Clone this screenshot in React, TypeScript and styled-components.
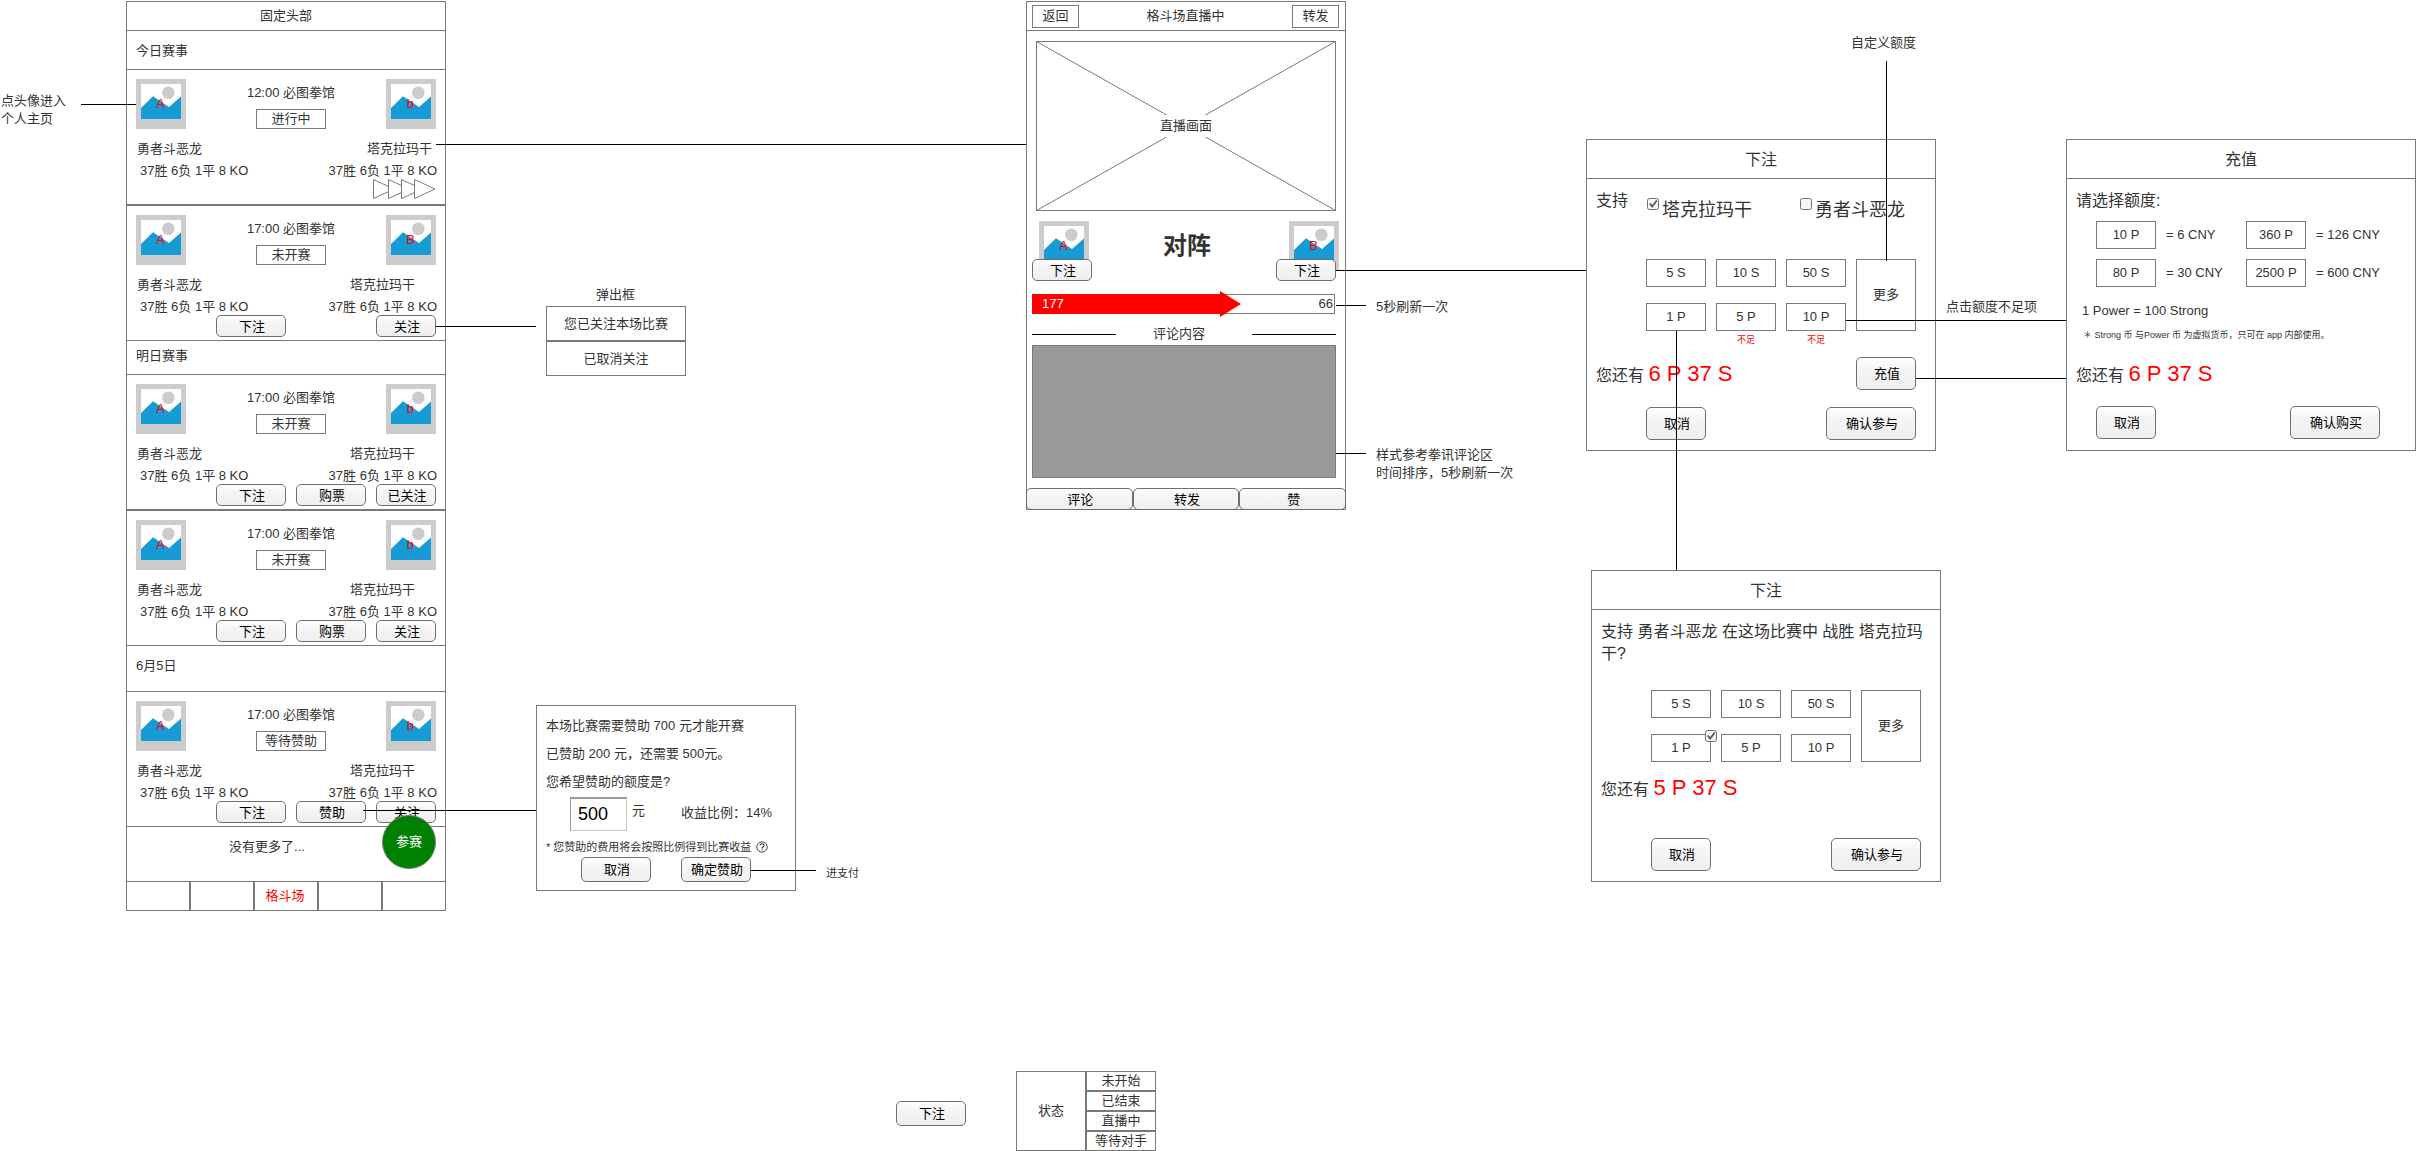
import React from "react";
import styled, { createGlobalStyle, css } from "styled-components";

const LINE = "#797979";
const INK = "#333333";

const GlobalStyle = createGlobalStyle`
  *, *::before, *::after { box-sizing: border-box; }
  body {
    margin: 0;
    background: #fff;
    color: ${INK};
    font-family: "Liberation Sans", "Noto Sans CJK SC", sans-serif;
    font-size: 13px;
    line-height: 18px;
  }
`;

/* ---------- canvas ---------- */

const Canvas = styled.main`
  position: relative;
  width: 2416px;
  height: 1151px;
  overflow: hidden;
  background: #fff;
`;

const Node = styled.section<{ $x: number; $y: number; $w?: number }>`
  position: absolute;
  left: ${(p) => p.$x}px;
  top: ${(p) => p.$y}px;
  ${(p) => p.$w && `width: ${p.$w}px;`}
`;

const Note = styled(Node).attrs({ as: "p" })<{ $size?: number }>`
  margin: 0;
  white-space: pre;
  font-size: ${(p) => p.$size ?? 13}px;
`;

const Connector = styled.i<{ $x: number; $y: number; $len: number; $vertical?: boolean }>`
  position: absolute;
  left: ${(p) => p.$x}px;
  top: ${(p) => p.$y}px;
  width: ${(p) => (p.$vertical ? 1 : p.$len)}px;
  height: ${(p) => (p.$vertical ? p.$len : 1)}px;
  background: #000;
`;

/* ---------- shared parts ---------- */

const Button = styled.button<{ $w?: number; $h?: number }>`
  flex: none;
  display: flex;
  align-items: center;
  justify-content: center;
  width: ${(p) => p.$w ?? 70}px;
  height: ${(p) => p.$h ?? 22}px;
  padding: 1px 0 0 2px;
  border: 1px solid #6e6e6e;
  border-radius: 5px;
  background: linear-gradient(#ffffff, #f5f5f5 35%, #efefef);
  color: #000;
  font: inherit;
  line-height: 18px;
`;

const Outline = styled.div<{ $w: number; $h: number }>`
  flex: none;
  display: flex;
  align-items: center;
  justify-content: center;
  width: ${(p) => p.$w}px;
  height: ${(p) => p.$h}px;
  border: 1px solid ${LINE};
  background: #fff;
`;

const AvatarBox = styled.div`
  flex: none;
  display: grid;
  width: 50px;
  height: 50px;
  > * { grid-area: 1 / 1; }
`;

const AvatarLetter = styled.span`
  padding: 16px 1px 0 0;
  text-align: center;
  color: #f00;
`;

function Avatar({ letter }: { letter: string }) {
  return (
    <AvatarBox>
      <svg width="50" height="50" viewBox="0 0 50 50">
        <rect width="50" height="50" fill="#cccccc" />
        <rect x="5" y="5" width="40" height="35" fill="#ffffff" />
        <circle cx="32.3" cy="13.7" r="6.3" fill="#cccccc" />
        <path d="M5 29 17 17.3 33 28 45 17.5V40H5Z" fill="#169bd5" />
      </svg>
      <AvatarLetter>{letter}</AvatarLetter>
    </AvatarBox>
  );
}

const Tick = styled.span`
  flex: none;
  display: block;
  width: 12px;
  height: 12px;
  svg { display: block; }
`;

function Checkbox({ checked }: { checked?: boolean }) {
  return (
    <Tick>
      <svg width="12" height="12" viewBox="0 0 12 12">
        <rect x="0.5" y="0.5" width="11" height="11" rx="2" fill="#f6f6f6" stroke="#6f6f6f" />
        {checked && <path d="M2.8 5.6 5.1 8.6 9.8 2.6" fill="none" stroke="#555" strokeWidth="1.7" />}
      </svg>
    </Tick>
  );
}

/* ---------- phone ---------- */

const Phone = styled.div<{ $h: number }>`
  display: flex;
  flex-direction: column;
  width: 320px;
  height: ${(p) => p.$h}px;
  border: 1px solid ${LINE};
  background: #fff;
  > * { flex-shrink: 0; }
`;

const PhoneHeader = styled.header`
  display: flex;
  align-items: center;
  justify-content: center;
  height: 29px;
  border-bottom: 1px solid ${LINE};
`;

const DayHeading = styled.div<{ $h: number; $pad: number }>`
  height: ${(p) => p.$h}px;
  padding: ${(p) => p.$pad}px 9px 0;
  border-bottom: 1px solid ${LINE};
`;

const MatchCard = styled.article<{ $ruled?: boolean }>`
  display: flex;
  flex-direction: column;
  height: ${(p) => (p.$ruled ? 136 : 135)}px;
  padding: 9px 9px 0;
  border-bottom: 1px solid ${LINE};
  ${(p) => p.$ruled && css`border-top: 1px solid ${LINE};`}
`;

const MatchTop = styled.div`
  display: flex;
  justify-content: space-between;
  height: 50px;
`;

const MatchInfo = styled.div`
  display: flex;
  flex-direction: column;
  align-items: center;
  gap: 7px;
  padding: 5px 0 0 10px;
`;

const Names = styled.div<{ $end: number }>`
  display: flex;
  justify-content: space-between;
  height: 29px;
  padding: 11px ${(p) => p.$end}px 0 1px;
`;

const Stats = styled.div`
  display: flex;
  justify-content: space-between;
  height: 20px;
  margin-right: -1px;
  padding: 4px 0 0 4px;
`;

const MatchActions = styled.div`
  display: flex;
  justify-content: flex-end;
  gap: 10px;
  margin-top: 1px;
`;

const Gap = styled.span`
  width: 70px;
`;

const Arrows = styled.svg`
  align-self: flex-end;
  display: block;
`;

const EndOfList = styled.div`
  height: 55px;
  padding: 11px 38px 0 0;
  border-bottom: 1px solid ${LINE};
  text-align: center;
`;

const TabBar = styled.nav`
  display: grid;
  grid-template-columns: 63px 64px 64px 64px 63px;
  height: 28px;
`;

const Tab = styled.span`
  display: flex;
  align-items: center;
  justify-content: center;
  padding-right: 2px;
  border: solid ${LINE};
  border-width: 0 1px;
  color: #f00;
  &:first-child { border-left: 0; }
  &:last-child { border-right: 0; }
`;

const JoinBadge = styled.div`
  position: absolute;
  left: 256px;
  top: 814px;
  display: flex;
  align-items: center;
  justify-content: center;
  width: 54px;
  height: 54px;
  border: 1px solid ${LINE};
  border-radius: 50%;
  background: #008000;
  color: #fff;
`;

type MatchProps = {
  time: string;
  status: string;
  rival?: string;
  ruled?: boolean;
  live?: boolean;
  actions?: (string | null)[];
};

const RECORD = "37胜 6负 1平 8 KO";

function Match({ time, status, rival = "b", ruled, live, actions = [] }: MatchProps) {
  return (
    <MatchCard $ruled={ruled}>
      <MatchTop>
        <Avatar letter="A" />
        <MatchInfo>
          <span>{time} 必图拳馆</span>
          <Outline $w={70} $h={20}>{status}</Outline>
        </MatchInfo>
        <Avatar letter={rival} />
      </MatchTop>
      <Names $end={live ? 4 : 21}>
        <span>勇者斗恶龙</span>
        <span>塔克拉玛干</span>
      </Names>
      <Stats>
        <span>{RECORD}</span>
        <span>{RECORD}</span>
      </Stats>
      {live ? (
        <Arrows width="64" height="22" viewBox="0 0 64 22" fill="#fff" stroke={LINE}>
          {[1.5, 16.5, 29.5, 42.5].map((x) => (
            <path key={x} d={`M${x} 1.5V20.5L${x + 20.5} 11Z`} />
          ))}
        </Arrows>
      ) : (
        <MatchActions>
          {actions.map((label, i) =>
            label ? <Button key={i} $w={i === 2 ? 60 : 70}>{label}</Button> : <Gap key={i} />
          )}
        </MatchActions>
      )}
    </MatchCard>
  );
}

/* ---------- live phone ---------- */

const LiveHeader = styled(PhoneHeader)`
  justify-content: space-between;
  padding: 0 6px 0 5px;
`;

const Video = styled.div`
  display: grid;
  place-items: center;
  width: 300px;
  height: 170px;
  margin: 10px 0 0 9px;
  > * { grid-area: 1 / 1; }
  svg { display: block; }
`;

const VideoLabel = styled.span`
  padding: 2px 0;
  background: #fff;
`;

const Versus = styled.div`
  display: grid;
  grid-template-columns: 1fr auto 1fr;
  height: 38px;
  padding: 0 6px 0 12px;
  margin-top: 10px;
  > :last-child { justify-self: end; }
`;

const VersusTitle = styled.h2`
  margin: 0;
  padding: 11px 4px 0 0;
  font-size: 24px;
  line-height: 28px;
  font-weight: 700;
`;

const VersusActions = styled.div`
  position: relative;
  display: flex;
  justify-content: space-between;
  padding: 0 9px 0 5px;
`;

const OddsBar = styled.div`
  display: grid;
  width: 303px;
  height: 26px;
  margin: 10px 0 0 5px;
  > * { grid-area: 1 / 1; }
`;

const OddsValues = styled.div`
  display: flex;
  justify-content: space-between;
  padding: 4px 2px 0 10px;
  > :first-child { color: #fff; }
`;

const CommentTitle = styled.div`
  display: grid;
  grid-template-columns: 84px 1fr 84px;
  height: 28px;
  padding: 8px 9px 0 5px;
  text-align: center;
  > span { margin-right: 10px; }
`;

const Rule = styled.i`
  height: 1px;
  margin-top: 9px;
  background: #000;
`;

const Comments = styled.div`
  width: 304px;
  height: 133px;
  margin-left: 5px;
  border: 1px solid ${LINE};
  background: #999;
`;

const Toolbar = styled.div`
  display: flex;
  width: 320px;
  margin: 10px -1px 0;
  > * { width: auto; flex: 1; }
`;

/* ---------- dialogs ---------- */

const Dialog = styled.div<{ $h: number }>`
  width: 350px;
  height: ${(p) => p.$h}px;
  border: 1px solid ${LINE};
  background: #fff;
`;

const DialogTitle = styled.header`
  display: flex;
  align-items: center;
  justify-content: center;
  height: 39px;
  padding-top: 2px;
  border-bottom: 1px solid ${LINE};
  font-size: 16px;
`;

const Support = styled.div`
  display: flex;
  height: 80px;
  padding: 10px 0 0 9px;
  font-size: 16px;
  line-height: 24px;
`;

const Choice = styled.label<{ $gap: number }>`
  display: flex;
  gap: 3px;
  margin-left: ${(p) => p.$gap}px;
  padding-top: 9px;
  font-size: 18px;
  white-space: nowrap;
`;

const Question = styled.p`
  width: 330px;
  height: 80px;
  margin: 0 0 0 9px;
  padding-top: 11px;
  font-size: 16px;
  line-height: 22px;
`;

const Amounts = styled.div`
  display: grid;
  grid-template-columns: repeat(4, 60px);
  grid-template-rows: 28px 28px;
  gap: 16px 10px;
  margin-left: 59px;
`;

const Amount = styled.div<{ $tall?: boolean }>`
  position: relative;
  display: flex;
  align-items: center;
  justify-content: center;
  padding-bottom: 1px;
  border: 1px solid ${LINE};
  ${(p) => p.$tall && css`grid-area: 1 / 4 / 3 / 5;`}
`;

const AmountMark = styled.span`
  position: absolute;
  right: -7px;
  top: -5px;
`;

const Shortages = styled.div`
  display: grid;
  grid-template-columns: repeat(4, 60px);
  column-gap: 10px;
  height: 26px;
  margin-left: 59px;
  color: #f00;
  font-size: 9px;
  text-align: center;
`;

const Shortage = styled.span<{ $col: number }>`
  grid-column: ${(p) => p.$col};
`;

const Balance = styled.div`
  display: flex;
  justify-content: space-between;
  height: 33px;
  padding: 0 19px 0 9px;
  font-size: 16px;
  line-height: 33px;
  > button { font-size: 13px; }
`;

const Owned = styled.strong`
  font-size: 22px;
  font-weight: 400;
  color: #f00;
`;

const DialogActions = styled.div<{ $top: number; $left?: number; $right?: number }>`
  display: flex;
  justify-content: space-between;
  margin-top: ${(p) => p.$top}px;
  padding: 0 ${(p) => p.$right ?? 19}px 0 ${(p) => p.$left ?? 59}px;
`;

const BalanceSlot = styled.div`
  height: 76px;
  padding-top: 9px;
`;

const PackPrompt = styled.p`
  height: 42px;
  margin: 0;
  padding: 12px 9px 0;
  font-size: 16px;
  line-height: 20px;
`;

const Packs = styled.div`
  display: grid;
  grid-template-columns: 60px 70px 60px 1fr;
  gap: 10px;
  margin-left: 29px;
  line-height: 27px;
  white-space: nowrap;
  > :nth-child(odd) { padding-bottom: 1px; }
`;

const PackPrice = styled.span`
  padding-right: 20px;
`;

const Rate = styled.p`
  margin: 15px 0 0 15px;
`;

const FinePrint = styled.p`
  height: 37px;
  margin: 0 0 0 16px;
  padding-top: 6px;
  font-size: 9px;
  white-space: pre;
`;

function BetAmounts({ marked }: { marked?: boolean }) {
  return (
    <Amounts>
      <Amount>5 S</Amount>
      <Amount>10 S</Amount>
      <Amount>50 S</Amount>
      <Amount>1 P{marked && <AmountMark><Checkbox checked /></AmountMark>}</Amount>
      <Amount>5 P</Amount>
      <Amount>10 P</Amount>
      <Amount $tall>更多</Amount>
    </Amounts>
  );
}

/* ---------- sponsor ---------- */

const SponsorCard = styled.div`
  display: flex;
  flex-direction: column;
  width: 260px;
  height: 186px;
  border: 1px solid ${LINE};
  padding: 6px 0 0 9px;
  background: #fff;
  line-height: 28px;
  white-space: nowrap;
`;

const SponsorRow = styled.div`
  display: flex;
  height: 39px;
  padding: 1px 0 0 24px;
`;

const SponsorInput = styled.input`
  width: 57px;
  height: 34px;
  padding: 0 0 0 7px;
  border: 1px solid #c8c8c8;
  border-top: 2px solid #999;
  border-left-color: #999;
  color: #000;
  font: 18px "Liberation Sans", sans-serif;
`;

const SponsorUnit = styled.span`
  width: 49px;
  margin-left: 5px;
`;

const SponsorRatio = styled.span`
  padding-top: 2px;
`;

const SponsorHint = styled.div`
  display: flex;
  align-items: center;
  gap: 5px;
  height: 20px;
  margin-top: 2px;
  font-size: 11px;
`;

const SponsorActions = styled.div`
  display: flex;
  gap: 30px;
  padding-left: 35px;
`;

/* ---------- tables ---------- */

const States = styled.div`
  display: grid;
  grid-template-columns: 70px 70px;
  > :first-child { grid-row: span 4; }
`;

export default function App() {
  return (
    <>
      <GlobalStyle />
      <Canvas lang="zh-CN">
        <Node $x={126} $y={1}>
          <Phone $h={910}>
            <PhoneHeader>固定头部</PhoneHeader>
            <DayHeading $h={39} $pad={11}>今日赛事</DayHeading>
            <Match time="12:00" status="进行中" live />
            <Match time="17:00" status="未开赛" rival="B" ruled actions={["下注", null, "关注"]} />
            <DayHeading $h={34} $pad={6}>明日赛事</DayHeading>
            <Match time="17:00" status="未开赛" actions={["下注", "购票", "已关注"]} />
            <Match time="17:00" status="未开赛" ruled actions={["下注", "购票", "关注"]} />
            <DayHeading $h={46} $pad={11}>6月5日</DayHeading>
            <Match time="17:00" status="等待赞助" actions={["下注", "赞助", "关注"]} />
            <EndOfList>没有更多了...</EndOfList>
            <TabBar>
              <Tab /><Tab /><Tab>格斗场</Tab><Tab /><Tab />
            </TabBar>
          </Phone>
          <JoinBadge>参赛</JoinBadge>
        </Node>

        <Node $x={546} $y={306}>
          <Outline $w={140} $h={35}>您已关注本场比赛</Outline>
          <Outline $w={140} $h={35}>已取消关注</Outline>
        </Node>

        <Node $x={536} $y={705}>
          <SponsorCard>
            <span>本场比赛需要赞助 700 元才能开赛</span>
            <span>已赞助 200 元，还需要 500元。</span>
            <span>您希望赞助的额度是?</span>
            <SponsorRow>
              <SponsorInput defaultValue="500" />
              <SponsorUnit>元</SponsorUnit>
              <SponsorRatio>收益比例：14%</SponsorRatio>
            </SponsorRow>
            <SponsorHint>
              * 您赞助的费用将会按照比例得到比赛收益
              <svg width="12" height="12" viewBox="0 0 12 12" fill="none" stroke={INK}>
                <circle cx="6" cy="6" r="5.2" strokeWidth="0.9" />
                <path d="M4 4.6C4 2.2 8 2.2 8 4.5 8 6 6 5.9 6 7.6M6 8.4V9.5" strokeWidth="1.1" />
              </svg>
            </SponsorHint>
            <SponsorActions>
              <Button $h={25}>取消</Button>
              <Button $h={25}>确定赞助</Button>
            </SponsorActions>
          </SponsorCard>
        </Node>

        <Node $x={1026} $y={1}>
          <Phone $h={509}>
            <LiveHeader>
              <Outline $w={47} $h={23}>返回</Outline>
              格斗场直播中
              <Outline $w={47} $h={23}>转发</Outline>
            </LiveHeader>
            <Video>
              <svg width="300" height="170" viewBox="0 0 300 170" fill="none" stroke={LINE}>
                <rect x="0.5" y="0.5" width="299" height="169" />
                <path d="M0.5 0.5 299.5 169.5M299.5 0.5 0.5 169.5" />
              </svg>
              <VideoLabel>直播画面</VideoLabel>
            </Video>
            <Versus>
              <Avatar letter="A" />
              <VersusTitle>对阵</VersusTitle>
              <Avatar letter="B" />
            </Versus>
            <VersusActions>
              <Button $w={60}>下注</Button>
              <Button $w={60}>下注</Button>
            </VersusActions>
            <OddsBar>
              <svg width="303" height="26" viewBox="0 0 303 26">
                <rect x="0.5" y="3.5" width="302" height="19" fill="#fff" stroke={LINE} />
                <path d="M0 3H188V0L209 13 188 26V23H0Z" fill="#f00" />
              </svg>
              <OddsValues>
                <span>177</span>
                <span>66</span>
              </OddsValues>
            </OddsBar>
            <CommentTitle>
              <Rule />
              <span>评论内容</span>
              <Rule />
            </CommentTitle>
            <Comments />
            <Toolbar>
              <Button>评论</Button>
              <Button>转发</Button>
              <Button>赞</Button>
            </Toolbar>
          </Phone>
        </Node>

        <Node $x={1586} $y={139}>
          <Dialog $h={312}>
            <DialogTitle>下注</DialogTitle>
            <Support>
              支持
              <Choice $gap={19}><Checkbox checked />塔克拉玛干</Choice>
              <Choice $gap={48}><Checkbox />勇者斗恶龙</Choice>
            </Support>
            <BetAmounts />
            <Shortages>
              <Shortage $col={2}>不足</Shortage>
              <Shortage $col={3}>不足</Shortage>
            </Shortages>
            <Balance>
              <span>您还有 <Owned>6 P 37 S</Owned></span>
              <Button $w={60} $h={33}>充值</Button>
            </Balance>
            <DialogActions $top={17}>
              <Button $w={60} $h={33}>取消</Button>
              <Button $w={90} $h={33}>确认参与</Button>
            </DialogActions>
          </Dialog>
        </Node>

        <Node $x={2066} $y={139}>
          <Dialog $h={312}>
            <DialogTitle>充值</DialogTitle>
            <PackPrompt>请选择额度:</PackPrompt>
            <Packs>
              <Outline $w={60} $h={28}>10 P</Outline>
              <PackPrice>= 6 CNY</PackPrice>
              <Outline $w={60} $h={28}>360 P</Outline>
              <PackPrice>= 126 CNY</PackPrice>
              <Outline $w={60} $h={28}>80 P</Outline>
              <PackPrice>= 30 CNY</PackPrice>
              <Outline $w={60} $h={28}>2500 P</Outline>
              <PackPrice>= 600 CNY</PackPrice>
            </Packs>
            <Rate>1 Power = 100 Strong</Rate>
            <FinePrint>＊ Strong 币 与Power 币 为虚拟货币，只可在 app 内部使用。</FinePrint>
            <Balance>
              <span>您还有 <Owned>6 P 37 S</Owned></span>
            </Balance>
            <DialogActions $top={16} $left={29} $right={35}>
              <Button $w={60} $h={33}>取消</Button>
              <Button $w={90} $h={33}>确认购买</Button>
            </DialogActions>
          </Dialog>
        </Node>

        <Node $x={1591} $y={570}>
          <Dialog $h={312}>
            <DialogTitle>下注</DialogTitle>
            <Question>支持 勇者斗恶龙 在这场比赛中 战胜 塔克拉玛干?</Question>
            <BetAmounts marked />
            <BalanceSlot>
              <Balance>
                <span>您还有 <Owned>5 P 37 S</Owned></span>
              </Balance>
            </BalanceSlot>
            <DialogActions $top={0}>
              <Button $w={60} $h={33}>取消</Button>
              <Button $w={90} $h={33}>确认参与</Button>
            </DialogActions>
          </Dialog>
        </Node>

        <Node $x={896} $y={1101}>
          <Button $h={25}>下注</Button>
        </Node>
        <Node $x={1016} $y={1071}>
          <States>
            <Outline $w={70} $h={80}>状态</Outline>
            <Outline $w={70} $h={20}>未开始</Outline>
            <Outline $w={70} $h={20}>已结束</Outline>
            <Outline $w={70} $h={20}>直播中</Outline>
            <Outline $w={70} $h={20}>等待对手</Outline>
          </States>
        </Node>

        <Note $x={1} $y={92}>{"点头像进入\n个人主页"}</Note>
        <Note $x={596} $y={286}>弹出框</Note>
        <Note $x={826} $y={864} $size={11}>进支付</Note>
        <Note $x={1376} $y={298}>5秒刷新一次</Note>
        <Note $x={1376} $y={446}>{"样式参考拳讯评论区\n时间排序，5秒刷新一次"}</Note>
        <Note $x={1851} $y={34}>自定义额度</Note>
        <Note $x={1946} $y={298}>点击额度不足项</Note>

        <Connector $x={81} $y={104} $len={55} />
        <Connector $x={436} $y={144} $len={590} />
        <Connector $x={436} $y={326} $len={100} />
        <Connector $x={363} $y={810} $len={173} />
        <Connector $x={751} $y={870} $len={65} />
        <Connector $x={1336} $y={270} $len={250} />
        <Connector $x={1336} $y={305} $len={30} />
        <Connector $x={1336} $y={453} $len={30} />
        <Connector $x={1846} $y={320} $len={220} />
        <Connector $x={1916} $y={378} $len={150} />
        <Connector $x={1886} $y={61} $len={200} $vertical />
        <Connector $x={1676} $y={331} $len={239} $vertical />
      </Canvas>
    </>
  );
}
